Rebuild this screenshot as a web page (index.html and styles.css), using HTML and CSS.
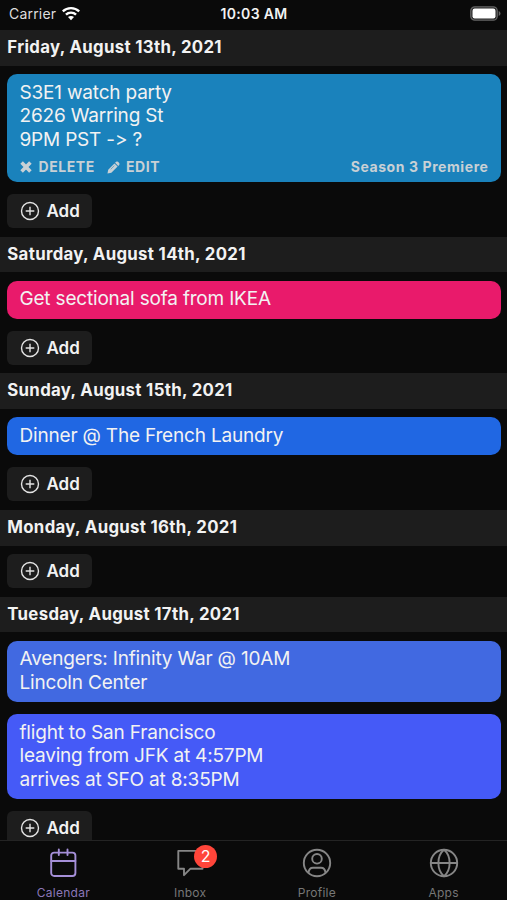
FILE: index.html
```html
<!DOCTYPE html>
<html lang="en">
<head>
<meta charset="utf-8">
<title>Calendar</title>
<link rel="stylesheet" href="styles.css">
</head>
<body>
<svg class="defs" aria-hidden="true">
  <symbol id="plus" viewBox="0 0 20 20"><circle cx="10" cy="10" r="8.5"/><path d="M10 5.7v8.6M5.7 10h8.6"/></symbol>
</svg>
<div class="screen">
  <header class="status">
    <div class="carrier"><span>Carrier</span>
      <svg class="wifi" viewBox="0 0 18 14"><path d="M9 0C5.500 0 2.300 1.400 0 3.600L1.600 5.300A10.700 10.700 0 0 1 16.400 5.300L18 3.600A13 13 0 0 0 9 0Z"/><path d="M9 4.500A8.500 8.500 0 0 0 3.100 6.800L4.800 8.500A6.200 6.200 0 0 1 13.200 8.500L14.900 6.800A8.500 8.500 0 0 0 9 4.500Z"/><path d="M9 8.900C7.800 8.900 6.800 9.300 6 10L9 13.200L12 10C11.200 9.300 10.200 8.900 9 8.900Z"/></svg>
    </div>
    <div class="time">10:03 AM</div>
    <svg class="battery" viewBox="0 0 31 15"><rect class="shell" x=".8" y=".8" width="26.400" height="13.400" rx="4"/><rect class="charge" x="2.500" y="2.500" width="23" height="10" rx="2.200"/><path class="tip" d="M28.700 5v5q1.800-.8 1.800-2.500T28.700 5Z"/></svg>
  </header>
  <main class="days">
    <section>
      <h2>Friday, August 13th, 2021</h2>
      <div class="events">
        <article class="card sky">
          <p>S3E1 watch party</p><p>2626 Warring St</p><p>9PM PST -&gt; ?</p>
          <footer>
            <span class="action del"><svg viewBox="0 0 12 12"><path d="M1.600 1.600l8.800 8.800M10.400 1.600l-8.800 8.800"/></svg>DELETE</span>
            <span class="action edit"><svg viewBox="0 0 14 14"><path d="M.5 13.500L1.300 9.300L8 2.600L11.400 6L4.700 12.700ZM8.700 1.900L9.700 .9Q10.800 0 11.900 .9L13.100 2.100Q14 3.200 13.100 4.300L12.100 5.300Z"/><path class="slit" d="M4 9L8 5"/></svg>EDIT</span>
            <span class="tag">Season 3 Premiere</span>
          </footer>
        </article>
        <button class="add"><svg><use href="#plus"/></svg>Add</button>
      </div>
    </section>
    <section>
      <h2>Saturday, August 14th, 2021</h2>
      <div class="events">
        <article class="card pink"><p>Get sectional sofa from IKEA</p></article>
        <button class="add"><svg><use href="#plus"/></svg>Add</button>
      </div>
    </section>
    <section>
      <h2>Sunday, August 15th, 2021</h2>
      <div class="events">
        <article class="card blue"><p>Dinner @ The French Laundry</p></article>
        <button class="add"><svg><use href="#plus"/></svg>Add</button>
      </div>
    </section>
    <section>
      <h2>Monday, August 16th, 2021</h2>
      <div class="events">
        <button class="add"><svg><use href="#plus"/></svg>Add</button>
      </div>
    </section>
    <section>
      <h2>Tuesday, August 17th, 2021</h2>
      <div class="events">
        <article class="card royal"><p>Avengers: Infinity War @ 10AM</p><p>Lincoln Center</p></article>
        <article class="card indigo"><p>flight to San Francisco</p><p>leaving from JFK at 4:57PM</p><p>arrives at SFO at 8:35PM</p></article>
        <button class="add"><svg><use href="#plus"/></svg>Add</button>
      </div>
    </section>
  </main>
  <nav class="tabs">
    <a class="tab active"><span class="icon"><svg viewBox="0 0 30 30"><rect x="3.200" y="4.600" width="24.200" height="23.400" rx="3"/><path d="M3.200 13h24.200M10.800 1.500v5.500M19.500 1.500v5.500"/></svg></span>Calendar</a>
    <a class="tab"><span class="icon"><svg viewBox="0 0 30 30"><path d="M3.300 2.900H27.500V20.700H15.500L9 27.200V20.700H3.300Z"/></svg><b class="badge">2</b></span>Inbox</a>
    <a class="tab"><span class="icon"><svg viewBox="0 0 30 30"><circle cx="15" cy="15" r="13.200"/><circle cx="15" cy="10.800" r="4.800"/><path d="M6.500 24.800Q7 19.700 11 19.700H19Q23 19.700 23.500 24.800"/></svg></span>Profile</a>
    <a class="tab"><span class="icon"><svg viewBox="0 0 30 30"><circle cx="15" cy="15" r="13.200"/><path d="M1.800 15H28.200M15 1.800C7.500 8 7.500 22 15 28.200C22.500 22 22.500 8 15 1.800Z"/></svg></span>Apps</a>
  </nav>
</div>
</body>
</html>
```
FILE: styles.css
```css
* { box-sizing: border-box; }
body { margin: 0; background: #0a0a0a; color: #f2f2f2; font-family: Inter, "Liberation Sans", sans-serif; font-feature-settings: "calt" 0; }
h2, p { margin: 0; }
.defs { display: none; }
.screen { height: 900px; display: flex; flex-direction: column; overflow: hidden; }
.status { flex: none; height: 30px; padding: 0 6px 3px 9px; display: grid; grid-template-columns: 1fr auto 1fr; align-items: center; font-size: 14px; }
.carrier { display: flex; align-items: center; gap: 6px; color: #dedede; letter-spacing: .2px; }
.wifi { width: 18px; height: 14px; fill: #fff; }
.time { font-weight: 600; font-size: 14px; letter-spacing: .3px; margin-left: -2px; }
.battery { justify-self: end; width: 31px; height: 15px; }
.shell { fill: #222; stroke: #656565; stroke-width: 1.300; }
.charge { fill: #fff; }
.tip { fill: #656565; }
.days { flex: 1; min-height: 0; overflow: hidden; }
h2 { height: 35.700px; padding-left: 7.300px; background: #1d1d1d; font-size: 16.800px; font-weight: 650; line-height: 34.200px; letter-spacing: .32px; white-space: nowrap; }
.events { padding: 8.600px 6.500px 8.550px 7px; display: flex; flex-direction: column; align-items: flex-start; gap: 12.150px; }
.card { align-self: stretch; padding: 6.500px 12.500px 7.600px; border-radius: 10px; font-size: 19px; line-height: 23.600px; letter-spacing: -.19px; white-space: nowrap; }
.sky { background: #1a82bc; }
.pink { background: #e91a6b; }
.blue { background: #2067e3; }
.royal { background: #4169e1; }
.indigo { background: #455af7; }
.card footer { height: 22.700px; padding-top: 9px; display: flex; align-items: center; font-size: 14px; font-weight: 700; color: #c8d0d5; line-height: 18px; letter-spacing: .58px; }
.action { display: flex; align-items: center; }
.del svg { width: 12px; height: 12px; margin-right: 7px; stroke: currentColor; stroke-width: 3.600; }
.edit { margin-left: 12px; }
.edit svg { width: 13px; height: 13px; margin-right: 6px; fill: currentColor; }
.edit .slit { fill: none; stroke: #1a82bc; stroke-width: .6; }
.tag { margin-left: auto; margin-right: -.5px; }
.add { width: 85px; height: 34px; padding: 0 0 0 13px; border: 0; border-radius: 6px; background: #1d1d1d; color: #f2f2f2; font: 600 17px Inter, sans-serif; display: flex; align-items: center; gap: 6.500px; }
.add svg { width: 20px; height: 20px; fill: none; stroke: #e4e4e4; stroke-width: 1.400; }
.tabs { flex: none; height: 60px; border-top: 1px solid #242424; background: #0a0a0a; display: grid; grid-template-columns: repeat(4, 1fr); }
.tab { display: flex; flex-direction: column; align-items: center; padding-top: 7px; font-size: 12px; line-height: 14px; letter-spacing: .25px; color: #777; }
.icon { position: relative; height: 30px; margin-bottom: 7.500px; }
.icon svg { width: 30px; height: 30px; display: block; fill: none; stroke: #868686; stroke-width: 1.900; stroke-linejoin: round; }
.active { color: #8b77b8; }
.active .icon svg { stroke: #a58fd8; stroke-linecap: round; }
.badge { position: absolute; left: 19px; top: -3px; width: 23px; height: 23px; border-radius: 50%; background: #ff453a; color: #fff; font-size: 16px; font-weight: 400; line-height: 23px; text-align: center; letter-spacing: 0; }
```
